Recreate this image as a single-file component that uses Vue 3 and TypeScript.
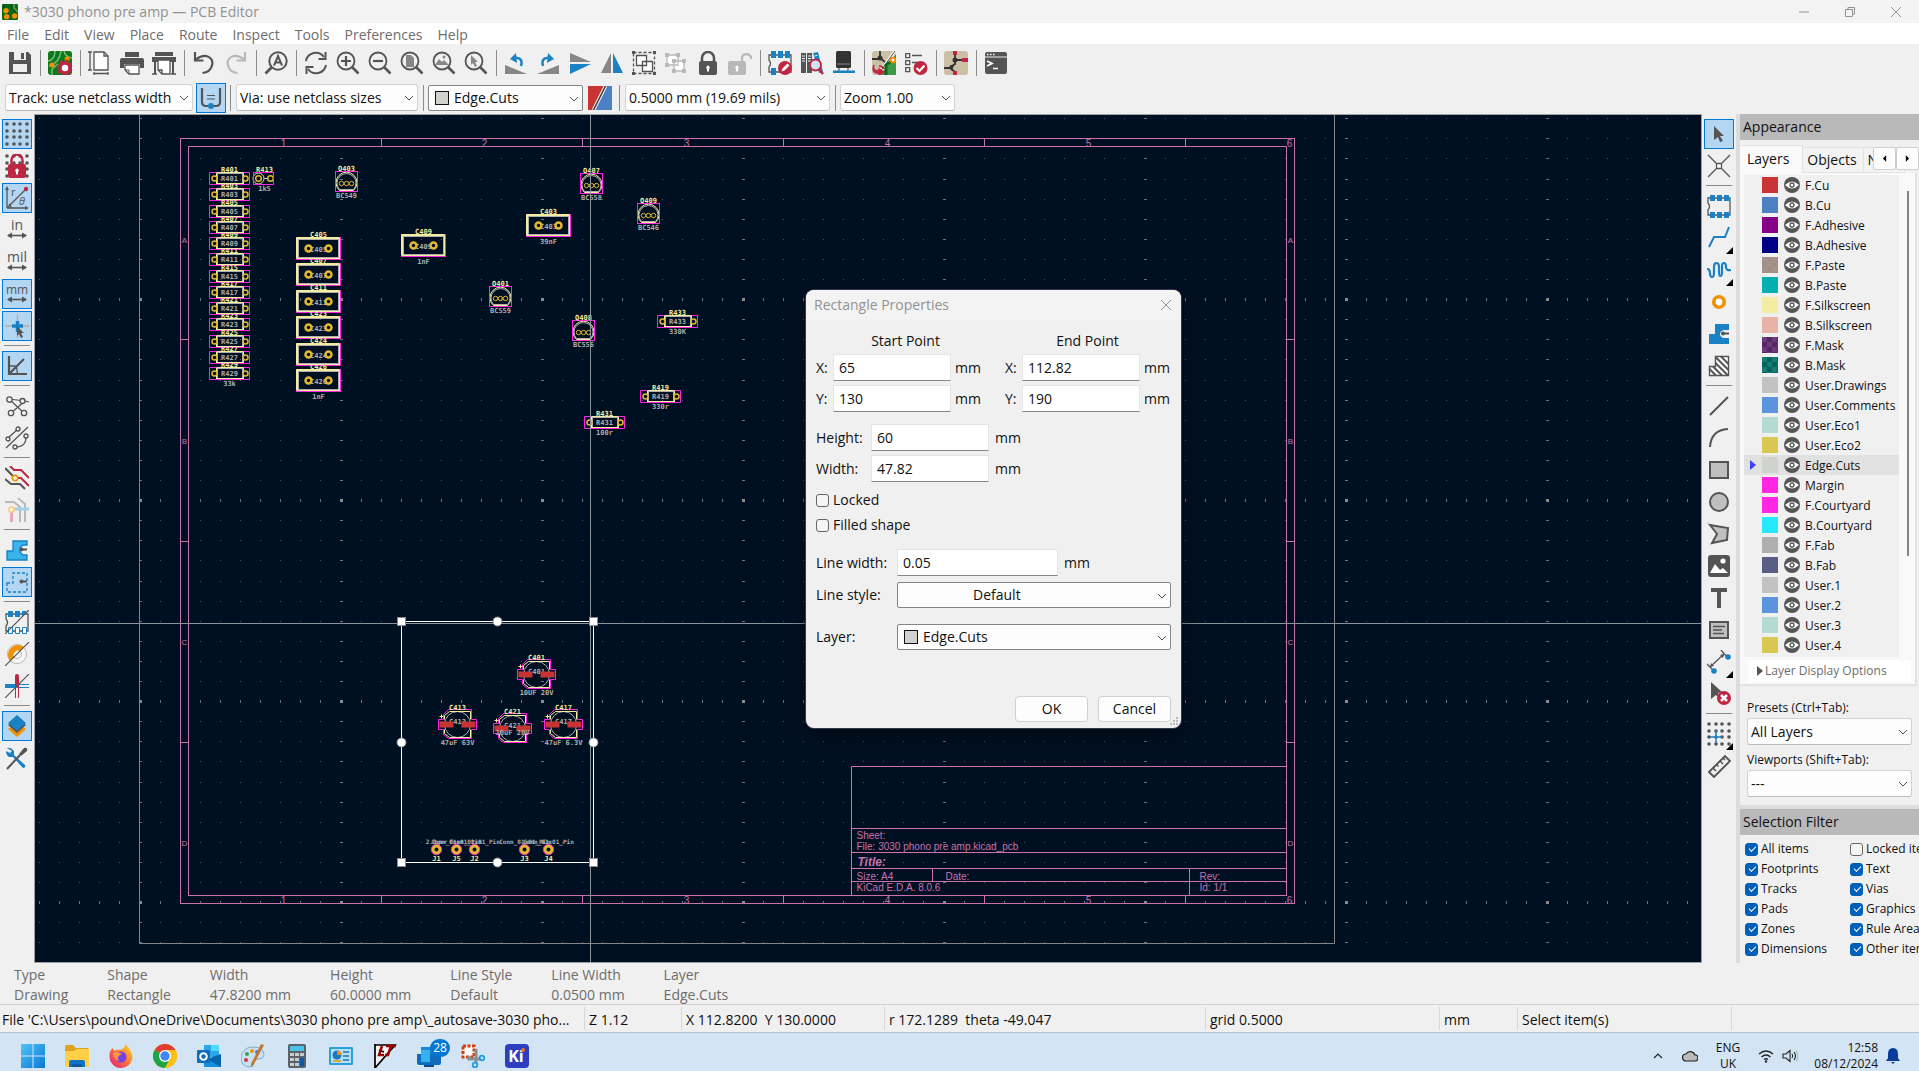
<script setup lang="ts">
import { ref } from 'vue'

type ToolItem = { icon: string; label: string; on?: boolean; more?: boolean } | null

const D = '#545454'
const B = '#1a81c4'
const R = '#bf2641'
const O = '#f29100'
const G = '#b9b9b9'

const lens = `<circle cx="10" cy="10" r="8.500" fill="none" stroke="${D}" stroke-width="1.800"/><path d="M16 16l6.500 6.500" stroke="${D}" stroke-width="2.500"/>`
const gridDots = (c: string) =>
  [2, 9, 15, 22].map(y => [2, 9, 15, 22].map(x => `<circle cx="${x}" cy="${y}" r="1.800" fill="${c}"/>`).join('')).join('')
const unitArrow = `<path d="M3 17.500h18" stroke="${D}" stroke-width="1.600"/><path d="M2 17.500l5-3v6zM22 17.500l-5-3v6z" fill="${D}"/>`
const unit = (t: string, size: number) =>
  `<text x="12" y="12" text-anchor="middle" font-family="Open Sans, sans-serif" font-size="${size}" fill="${D}">${t}</text>${unitArrow}`
const chip = `<path d="M1 4h22v17H1v-5q3-3.500 0-7z" fill="none" stroke="${D}" stroke-width="1.300"/>`
const chipPads = `<path d="M3 1h5v6H3zM10 1h5v6h-5zM17 1h5v6h-5zM3 18h5v6H3zM10 18h5v6h-5zM17 18h5v6h-5z" fill="${B}"/>`

const icons: Record<string, string> = {
  app: `<rect width="24" height="24" rx="2" fill="#0a6b14"/><path d="M3 0v7l6 5v12M14 0v5l5 5v14" stroke="#052" stroke-width="3" fill="none"/><path d="M18 0v6l6 6" stroke="#6aaf5a" stroke-width="2" fill="none"/><circle cx="6" cy="10" r="4" fill="${O}"/><circle cx="7" cy="19" r="4" fill="${O}"/><circle cx="19" cy="18" r="4" fill="${O}"/>`,
  save: `<path d="M1 1h19l3 3v19H1z" fill="${D}"/><rect x="6" y="1" width="12" height="8" fill="#efefef"/><rect x="13" y="2" width="3" height="6" fill="${D}"/><rect x="5" y="13" width="14" height="8" fill="#efefef"/>`,
  boardSetup: `<rect width="24" height="24" rx="3" fill="#0c7a1c"/><path d="M0 10C6 9 7 5 7 0M1 15c8-2 11-7 12-15M16 0q1 6 8 7M4 24v-6l6-5" fill="none" stroke="#7dbb7d" stroke-width="1.500"/><circle cx="4" cy="14" r="2.500" fill="${O}"/><circle cx="19" cy="8" r="2.500" fill="${O}"/><circle cx="17" cy="17" r="5" fill="#fff" stroke="${R}" stroke-width="3.500"/><circle cx="17" cy="17" r="7.500" fill="none" stroke="${R}" stroke-width="1.800" stroke-dasharray="3 2.900"/>`,
  page: `<path d="M6 1h10l4 4v14H6z" fill="#fff" stroke="${D}" stroke-width="1.300"/><path d="M16 1v4h4M2 1v18M0 1h4M0 19h4M6 22.500h14M6 21v3M20 21v3" fill="none" stroke="${D}" stroke-width="1.300"/>`,
  print: `<path d="M5 1h14v5H5zM0 9q0-2 2-2h20q2 0 2 2v8h-4v-4H4v4H0z" fill="${D}"/><path d="M5 14h14v9H9l-4-4z" fill="#fff" stroke="${D}" stroke-width="1.300"/><path d="M5 19h4v4" fill="none" stroke="${D}"/>`,
  plot: `<path d="M3 1h18v4H3zM0 6h24v5H0zM2 11h2v12H2zM20 11h2v12h-2z" fill="${D}"/><path d="M6 9h12v14h-8l-4-4z" fill="#fff" stroke="${D}" stroke-width="1.300"/><path d="M6 19h4v4M0 23h5M19 23h5" fill="none" stroke="${D}" stroke-width="1.300"/>`,
  undo: `<path d="M4 8.500C14 1 22 7 20 14.500q-2 7-9.500 7.500" fill="none" stroke="${D}" stroke-width="2.200"/><path d="M3 1v8.500h8.500" fill="none" stroke="${D}" stroke-width="2.200"/>`,
  redo: `<path d="M20 8.500C10 1 2 7 4 14.500q2 7 9.500 7.500" fill="none" stroke="${G}" stroke-width="2.200"/><path d="M21 1v8.500h-8.500" fill="none" stroke="${G}" stroke-width="2.200"/>`,
  find: `<circle cx="14" cy="10" r="8.700" fill="none" stroke="${D}" stroke-width="2"/><path d="M8 16l-6.500 6.500" stroke="${D}" stroke-width="2.800"/><path d="M10 14.500l4-9.500 4 9.500M11.500 11.500h5" fill="none" stroke="${D}" stroke-width="2"/>`,
  refresh: `<path d="M2 10a10 10 0 0 1 18-4M22 14a10 10 0 0 1-18 4" fill="none" stroke="${D}" stroke-width="2"/><path d="M21.500 1v7h-7M2.500 23v-7h7" fill="none" stroke="${D}" stroke-width="2"/>`,
  zoomIn: `${lens}<path d="M5 10h10M10 5v10" stroke="${D}" stroke-width="2.200"/>`,
  zoomOut: `${lens}<path d="M5 10h10" stroke="${D}" stroke-width="2.200"/>`,
  zoomPage: `${lens}<path d="M6 4h5l3 3v9H6z" fill="#868686"/>`,
  zoomObj: `${lens}<path d="M3 14l4-6 3 3 2-2 5 5z" fill="#868686"/><circle cx="12" cy="6" r="1.500" fill="#868686"/>`,
  zoomSel: `${lens}<path d="M7 4l7 7h-3l2 4-2 1-2-4-2 2z" fill="#868686"/>`,
  rotL: `<path d="M1 14l22 9H1z" fill="#868686"/><path d="M17 15c2-7-2-9-8-8" fill="none" stroke="${B}" stroke-width="2.500"/><path d="M12 2L6 8l7 4z" fill="${B}"/>`,
  rotR: `<path d="M23 14v9H1z" fill="#868686"/><path d="M7 15C5 8 9 6 15 7" fill="none" stroke="${B}" stroke-width="2.500"/><path d="M12 2l6 6-7 4z" fill="${B}"/>`,
  flipV: `<path d="M2 2l21 9H2z" fill="#868686"/><path d="M2 13h21L2 23z" fill="${B}"/>`,
  flipH: `<path d="M11 2v20H1z" fill="#868686"/><path d="M13 2v20h10z" fill="${B}"/>`,
  group: `<path d="M1.500 1.500h21v21h-21z" fill="none" stroke="${D}" stroke-width="1.300" stroke-dasharray="3 2"/><path d="M0 0h3v3H0zM21 0h3v3h-3zM0 21h3v3H0zM21 21h3v3h-3z" fill="${D}"/><path d="M4.500 4.500h10v10h-10zM10.500 10.500h10v10h-10z" fill="#fff" stroke="${D}" stroke-width="1.300"/>`,
  ungroup: `<path d="M3 4h11v10H3zM10 10h10v10H10z" fill="#fff" stroke="${G}" stroke-width="1.300"/><path d="M1 2h4v4H1zM12 2h4v4h-4zM1 12h4v4H1zM8 8h4v4H8zM18 8h4v4h-4zM8 18h4v4H8zM18 18h4v4h-4z" fill="${G}"/>`,
  lock: `<path d="M6 11V7a6 6 0 0 1 12 0v4" fill="none" stroke="${D}" stroke-width="2.500"/><rect x="3" y="10" width="18" height="14" rx="2" fill="${D}"/><path d="M12 14.500a2 2 0 0 1 1 3.500v2.500h-2V18a2 2 0 0 1 1-3.500" fill="#fff"/>`,
  unlock: `<path d="M14 11V6a5 5 0 0 1 9 0v2" fill="none" stroke="${G}" stroke-width="2.200"/><rect x="0" y="10" width="18" height="14" rx="2" fill="${G}"/><path d="M9 14.500a2 2 0 0 1 1 3.500v2.500H8V18a2 2 0 0 1 1-3.500" fill="#fff"/>`,
  fpEdit: `${chip}<path d="M3 0h5v7H3zM10 0h5v7h-5zM17 0h5v7h-5zM3 17h5v7H3z" fill="${B}"/><circle cx="17" cy="17" r="7" fill="${R}"/><path d="M13.500 20.500l1-3 5-5 2 2-5 5z" fill="#fff"/>`,
  lib: `<path d="M1 2h5v20H1zM7 2h5v20H7z" fill="${D}"/><path d="M13 2l5-1 5 20-4 1z" fill="${B}"/><path d="M2 5h3M2 7.500h3M2 10h3M8 5h3M8 7.500h3M8 10h3M14.500 5l3-.700" stroke="#efefef"/><path d="M19 18l4 5" stroke="${R}" stroke-width="2.500"/><circle cx="15.500" cy="14" r="5.500" fill="#cfe3f3" stroke="${R}" stroke-width="1.800"/>`,
  view3d: `<rect x="4" y="0" width="15" height="17" rx="1.500" fill="#333"/><path d="M5 13h13" stroke="#888"/><path d="M7 17v4M16 17v4" stroke="#777" stroke-width="1.500"/><rect x="1" y="19.500" width="22" height="2.500" fill="${B}"/>`,
  update: `<rect width="24" height="24" rx="3" fill="#cbbfa5"/><path d="M24 3v21H9z" fill="#3f9a48"/><path d="M0 8h8M8 0v7l5 4" stroke="#333" stroke-width="1.800" fill="none"/><circle cx="8" cy="7" r="2.500" fill="#333"/><path d="M23 0L8 21" stroke="#fff" stroke-width="3"/><path d="M23 0L8 21" stroke="#444" stroke-width="1"/><path d="M14 24V14l10-7" stroke="#0a6b14" stroke-width="3" fill="none"/><circle cx="21" cy="9" r="2.300" fill="#fff" stroke="${O}" stroke-width="2"/><path d="M2 14q-2 6 5 6v-2l5 3-5 3v-2q-8 0-5-8M12 18q-1-3-5-3" fill="${R}" stroke="${R}" stroke-width="1.500"/>`,
  drc: `<path d="M1.700 2.700h4v4h-4zM1.700 9.700h4v4h-4zM1.700 16.700h4v4h-4zM8 4.500h10M8 11.500h6" fill="none" stroke="${D}" stroke-width="1.300"/><circle cx="16.500" cy="17" r="7" fill="${R}"/><path d="M12.500 17l3 3 5-5.500" fill="none" stroke="#fff" stroke-width="2.200"/>`,
  net: `<rect width="24" height="24" rx="3" fill="#cbbfa5"/><path d="M11 3v11M11 9h10M0 17h5l6-4M6 17l5 4" stroke="#333" stroke-width="1.800" fill="none"/><circle cx="11" cy="9" r="2.500" fill="#333"/><path d="M6 14l4 0-2 6z" fill="#333"/><path d="M9 0h4v4H9zM18 7h6v4h-6zM9 20h4v4H9z" fill="${R}"/>`,
  script: `<rect x="1" y="1" width="22" height="22" rx="2" fill="${D}"/><path d="M1 6h22" stroke="#efefef"/><path d="M3 3.500h1.500M6 3.500h1.500M9 3.500h1.500" stroke="#fff" stroke-width="1.500"/><path d="M3 10l5 2.500L3 15M9 17.500h5" fill="none" stroke="#fff" stroke-width="1.700"/>`,
  trackVia: `<path d="M3 2v14q0 4 4 4h10q4 0 4-4V2" fill="none" stroke="${D}" stroke-width="2.200"/><path d="M8 9.500h8M8 13h8" stroke="${D}" stroke-width="1.200"/><circle cx="12" cy="20" r="3" fill="${B}"/>`,
  pair: `<path d="M0 0h18L6 24H0z" fill="#c83434"/><path d="M18 0h6v24H6z" fill="#4d7fc4"/><path d="M17.500 0L5.500 24" stroke="#fff" stroke-width="3.500"/><path d="M17.500 0L5.500 24" stroke="#333" stroke-width="1.500"/>`,
  grid: gridDots(D),
  gridLock: `${gridDots(D)}<path d="M6.500 12V6a5.500 5.500 0 0 1 11 0v6" fill="none" stroke="${R}" stroke-width="2.500"/><rect x="3" y="10" width="18" height="14" rx="2" fill="${R}"/><path d="M12 14.500a2 2 0 0 1 1 3.500v2.500h-2V18a2 2 0 0 1 1-3.500" fill="#fff"/>`,
  polar: `<path d="M2 22V2M2 22h20M2 22L20 4M6 22q0-2-2-4" fill="none" stroke="${D}" stroke-width="1.300"/><path d="M2 0l2 4H0zM24 22l-4-2v4z" fill="${D}"/><circle cx="21" cy="3" r="2.200" fill="${R}"/><text x="6" y="10" font-size="11" font-family="Open Sans, sans-serif" fill="${D}">r</text><text x="14" y="19" font-size="11" font-style="italic" font-family="Open Sans, sans-serif" fill="${D}">θ</text>`,
  in: unit('in', 14),
  mil: unit('mil', 14),
  mm: unit('mm', 12),
  cursor: `<path d="M0 12h24M12.500 0v24" stroke="#b9a999" stroke-width="1.300"/><path d="M7 12h11M12.500 7v11" stroke="${B}" stroke-width="3.500"/><path d="M12 12l7 7h-3l2 4-2 1-2-4-2 2z" fill="${D}"/>`,
  angle: `<path d="M4 2v18h18M4 20L19 5" fill="none" stroke="${D}" stroke-width="2.200"/><path d="M4 12h6q3 3 2 8" fill="none" stroke="${D}" stroke-width="1.300"/>`,
  rats: `<path d="M4 5l16 2M4 5l15 14M20 7L6 19M20 7l4 1" stroke="${D}" stroke-width="1.200"/><g fill="#f0f0f0" stroke="${D}" stroke-width="1.300"><circle cx="4.500" cy="5.500" r="2.700"/><circle cx="17.500" cy="7" r="2.500"/><circle cx="6" cy="19" r="2.700"/><circle cx="19" cy="19" r="2.700"/></g>`,
  ratsCurve: `<path d="M1 22L23 1M3 12l10-9M10 21c9 0 11-4 11-10" fill="none" stroke="${D}" stroke-width="1.300"/><g fill="#f0f0f0" stroke="${D}" stroke-width="1.300"><circle cx="3" cy="13" r="2"/><circle cx="13" cy="3" r="2"/><circle cx="10" cy="21" r="2"/><circle cx="21" cy="10" r="2"/></g>`,
  netColor: `<path d="M0 2l9 9M0 13l6 5h9l5 5" fill="none" stroke="${D}" stroke-width="2"/><path d="M5 0l4 4h7l8 8M11 12h5l8 8" fill="none" stroke="${R}" stroke-width="2"/><circle cx="10" cy="12" r="2.700" fill="#fff" stroke="${O}" stroke-width="1.700"/>`,
  netDim: `<path d="M0 4h9l6 5v15M13 0l7 6v18" fill="none" stroke="${G}" stroke-width="2"/><path d="M6 11h18" stroke="#a5cee9" stroke-width="3"/><path d="M6.500 12v12" stroke="#e6a9b3" stroke-width="3"/><circle cx="6.500" cy="11.500" r="2.500" fill="#fff" stroke="#f8d08f" stroke-width="2"/>`,
  zone: `<path d="M2 13h6V3h14v4h-4l-3 3v4l3 3h4v5H2z" fill="#39b4ea" stroke="${B}" stroke-width="1.300"/><circle cx="16.500" cy="11.500" r="2" fill="${D}"/><path d="M17 11.500h5" stroke="${D}" stroke-width="2"/>`,
  zoneOut: `<path d="M2 13h6V3h14v19H2z" fill="none" stroke="${B}" stroke-width="1.300" stroke-dasharray="3 2"/><circle cx="16.500" cy="11.500" r="2" fill="${D}"/><path d="M17 11.500h5" stroke="${D}" stroke-width="2"/>`,
  padOut: `${chip}<path d="M3 1h5v6H3zM10 1h5v6h-5zM17 1h5l-5 6z" fill="${B}"/><path d="M3.500 17.500h4v6h-4zM10.500 17.500h4v6h-4zM17.500 17.500h4v6h-4z" fill="#fff" stroke="${B}"/><path d="M0 24L24 0" stroke="${D}" stroke-width="1.200"/>`,
  viaOut: `<circle cx="12" cy="12" r="9.500" fill="#f6f6f6" stroke="${G}"/><circle cx="12" cy="12" r="4.500" fill="none" stroke="${G}"/><path d="M19 5A10 10 0 0 0 5 19l4-4a4.500 4.500 0 0 1 6-6z" fill="${O}"/><path d="M0 24L24 0" stroke="${D}" stroke-width="1.200"/>`,
  trackOut: `<path d="M1 12h10" stroke="${B}" stroke-width="4" stroke-linecap="round"/><path d="M12 2v9" stroke="${R}" stroke-width="4" stroke-linecap="round"/><path d="M12 10.500h12M12 13.500h12" stroke="${B}"/><path d="M10.500 12v12M13.500 12v12" stroke="${R}"/><path d="M0 24L24 0" stroke="${D}" stroke-width="1.200"/>`,
  layers: `<path d="M3 15l9 8 9-8-3-2-6 5-6-5z" fill="${O}"/><path d="M3 11l9 8 9-8-3-2-6 5-6-5z" fill="${D}"/><path d="M12 1l9 8-9 8-9-8z" fill="${B}"/>`,
  prefs: `<path d="M2 2q4-1 7 3v4l11 10q1 3-2 3L8 11H4Q1 9 1 5l4 2 2-2z" fill="${B}"/><path d="M2 23L15 9" stroke="${D}" stroke-width="2"/><path d="M14 8l5-6q4-1 3 3l-6 5z" fill="${D}"/>`,
  arrow: `<path d="M7 4l10 10h-4l3 5-3 1-2-5-4 3z" fill="${D}"/>`,
  cross: `<path d="M1 1l22 22M23 1L1 23" stroke="${D}" stroke-width="1.300"/><rect x="9.500" y="9.500" width="5" height="5" rx="1" fill="#fff" stroke="${D}" stroke-width="1.300"/>`,
  fpAdd: chip + chipPads,
  route: `<path d="M2 21l5-10h11l4-10" fill="none" stroke="${B}" stroke-width="2"/>`,
  tune: `<path d="M0 11q3 0 3 4t2 4 2-5V9q0-4 2.500-4T12 9v5q0 4 1.500 4T15 14V8q0-3 2-3t2 4q0 4 5 3" fill="none" stroke="${B}" stroke-width="2.200"/>`,
  via: `<circle cx="12" cy="12" r="5.200" fill="#fff" stroke="${O}" stroke-width="3.600"/>`,
  zoneAdd: `<path d="M2 12h6V2h14v6h-5q-4 1-4 4t4 4h5v6H2z" fill="${B}"/><circle cx="16" cy="11.500" r="2" fill="${D}"/><path d="M16 11.500h6" stroke="${D}" stroke-width="2"/>`,
  rule: `<path d="M2.500 12.500h6v-10h13v19h-19z" fill="#fff" stroke="${D}" stroke-width="1.400"/><path d="M2.500 15l6.500 6.500M6 12.500l9 9M8.500 9L21 21.500M8.500 3L21.500 16M14 2.500l7.500 7.500" stroke="${D}" stroke-width="2"/>`,
  line: `<path d="M3 21L21 3" stroke="${D}" stroke-width="2"/>`,
  arc: `<path d="M3 21Q4 4 21 3" fill="none" stroke="${D}" stroke-width="2"/>`,
  rect: `<rect x="3" y="4" width="18" height="16" fill="#bfbfbf" stroke="${D}" stroke-width="2"/>`,
  circle: `<circle cx="12" cy="12" r="9" fill="#bfbfbf" stroke="${D}" stroke-width="2"/>`,
  poly: `<path d="M3 3l18 3-1 12-15 3 5-9z" fill="#bfbfbf" stroke="${D}" stroke-width="2"/>`,
  image: `<rect x="1" y="1" width="22" height="22" rx="3" fill="${D}"/><path d="M3 19l5-9 5 6 3-2 5 5z" fill="#fff"/><circle cx="16" cy="7" r="2.600" fill="#fff"/>`,
  text: `<path d="M4 2h16v4h-6v16h-4V6H4z" fill="${D}"/>`,
  textbox: `<rect x="3" y="4" width="18" height="16" fill="#bfbfbf" stroke="${D}" stroke-width="2"/><path d="M6 8.500h12M6 12h9M6 15.500h11" stroke="${D}" stroke-width="1.300"/>`,
  dim: `<path d="M3 17L17 4M0 14l6 6M14 0l6 7" stroke="${D}" stroke-width="1.300"/><path d="M3 17l1-4 3 3zM17 4l-4 1 3 3z" fill="${D}"/><circle cx="7" cy="21" r="2.800" fill="${B}"/><circle cx="21" cy="7" r="2.800" fill="${B}"/>`,
  del: `<path d="M4 0l11 10-4 1 1 5-3-3-5 4z" fill="${D}"/><circle cx="17" cy="16" r="7" fill="${R}"/><path d="M14 13l6 6M20 13l-6 6" stroke="#fff" stroke-width="2.500"/>`,
  origin: `${gridDots(D)}<path d="M3 15h12M9 9v12" stroke="${B}" stroke-width="1.500"/>`,
  measure: `<path d="M2 18L18 2l5 5L7 23z" fill="none" stroke="${D}" stroke-width="1.900"/><path d="M6 14l3 3M9.500 10.500l2 2M13 7l3 3M16 4l2 2" stroke="${D}" stroke-width="1.500"/>`,
}

const topTools: ToolItem[] = [
  { icon: 'save', label: 'Save' }, null,
  { icon: 'boardSetup', label: 'Board Setup' }, null,
  { icon: 'page', label: 'Page Settings' }, { icon: 'print', label: 'Print' }, { icon: 'plot', label: 'Plot' }, null,
  { icon: 'undo', label: 'Undo' }, { icon: 'redo', label: 'Redo' }, null,
  { icon: 'find', label: 'Find' }, null,
  { icon: 'refresh', label: 'Refresh' }, { icon: 'zoomIn', label: 'Zoom In' }, { icon: 'zoomOut', label: 'Zoom Out' },
  { icon: 'zoomPage', label: 'Zoom to Fit' }, { icon: 'zoomObj', label: 'Zoom to Objects' }, { icon: 'zoomSel', label: 'Zoom to Selection' }, null,
  { icon: 'rotL', label: 'Rotate Counterclockwise' }, { icon: 'rotR', label: 'Rotate Clockwise' },
  { icon: 'flipV', label: 'Mirror Vertically' }, { icon: 'flipH', label: 'Mirror Horizontally' },
  { icon: 'group', label: 'Group' }, { icon: 'ungroup', label: 'Ungroup' }, { icon: 'lock', label: 'Lock' }, { icon: 'unlock', label: 'Unlock' }, null,
  { icon: 'fpEdit', label: 'Footprint Editor' }, { icon: 'lib', label: 'Footprint Library' }, { icon: 'view3d', label: '3D Viewer' }, null,
  { icon: 'update', label: 'Update PCB' }, { icon: 'drc', label: 'Design Rules Checker' }, null,
  { icon: 'net', label: 'Schematic Editor' }, null,
  { icon: 'script', label: 'Scripting Console' },
]

const leftTools: ToolItem[] = [
  { icon: 'grid', label: 'Show Grid', on: true }, { icon: 'gridLock', label: 'Grid Overrides' },
  { icon: 'polar', label: 'Polar Coordinates', on: true }, { icon: 'in', label: 'Inches' }, { icon: 'mil', label: 'Mils' },
  { icon: 'mm', label: 'Millimeters', on: true }, { icon: 'cursor', label: 'Full-Window Crosshairs', on: true }, null,
  { icon: 'angle', label: '45 Degree Limit', on: true }, null,
  { icon: 'rats', label: 'Show Ratsnest' }, { icon: 'ratsCurve', label: 'Curved Ratsnest' }, null,
  { icon: 'netColor', label: 'Inactive Layer Mode' }, { icon: 'netDim', label: 'Net Highlight' }, null,
  { icon: 'zone', label: 'Draw Zone Fills' }, { icon: 'zoneOut', label: 'Draw Zone Outlines', on: true }, null,
  { icon: 'padOut', label: 'Sketch Pads' }, { icon: 'viaOut', label: 'Sketch Vias' }, { icon: 'trackOut', label: 'Sketch Tracks' }, null,
  { icon: 'layers', label: 'Appearance Manager', on: true }, { icon: 'prefs', label: 'Properties Manager' },
]

const rightTools: ToolItem[] = [
  { icon: 'arrow', label: 'Select', on: true }, { icon: 'cross', label: 'Local Ratsnest' }, null,
  { icon: 'fpAdd', label: 'Place Footprint' }, { icon: 'route', label: 'Route Tracks', more: true }, { icon: 'tune', label: 'Tune Length', more: true },
  { icon: 'via', label: 'Place Via' }, { icon: 'zoneAdd', label: 'Draw Zone' }, { icon: 'rule', label: 'Draw Rule Area' }, null,
  { icon: 'line', label: 'Draw Line' }, { icon: 'arc', label: 'Draw Arc' }, { icon: 'rect', label: 'Draw Rectangle' },
  { icon: 'circle', label: 'Draw Circle' }, { icon: 'poly', label: 'Draw Polygon' }, { icon: 'image', label: 'Place Image' },
  { icon: 'text', label: 'Place Text' }, { icon: 'textbox', label: 'Draw Text Box' }, { icon: 'dim', label: 'Draw Dimension', more: true },
  { icon: 'del', label: 'Delete' }, null,
  { icon: 'origin', label: 'Grid Origin', more: true }, { icon: 'measure', label: 'Measure' },
]

const menus = ['File', 'Edit', 'View', 'Place', 'Route', 'Inspect', 'Tools', 'Preferences', 'Help']

const layers: [string, string, string?][] = [
  ['F.Cu', '#c83434'], ['B.Cu', '#4d7fc4'], ['F.Adhesive', '#840084'], ['B.Adhesive', '#000084'],
  ['F.Paste', '#a5948c', '#a08f87'], ['B.Paste', '#00b2b2', '#08acac'], ['F.Silkscreen', '#f2eda1'], ['B.Silkscreen', '#e8b2a7'],
  ['F.Mask', '#6d3a80', '#562662'], ['B.Mask', '#187c72', '#02645c'], ['User.Drawings', '#c2c2c2'], ['User.Comments', '#5994dc'],
  ['User.Eco1', '#b4dbd2'], ['User.Eco2', '#d8c852'], ['Edge.Cuts', '#d0d2cd'], ['Margin', '#ff26e2'],
  ['F.Courtyard', '#ff26e2'], ['B.Courtyard', '#26e9ff'], ['F.Fab', '#afafaf'], ['B.Fab', '#585d84'],
  ['User.1', '#c2c2c2'], ['User.2', '#5994dc'], ['User.3', '#b4dbd2'], ['User.4', '#d8c852'],
]
const checks = (c: string) => `conic-gradient(${c} 25%, transparent 0 50%, ${c} 0 75%, transparent 0)`

const filters = ref([
  { name: 'All items', on: true }, { name: 'Locked items', on: false },
  { name: 'Footprints', on: true }, { name: 'Text', on: true },
  { name: 'Tracks', on: true }, { name: 'Vias', on: true },
  { name: 'Pads', on: true }, { name: 'Graphics', on: true },
  { name: 'Zones', on: true }, { name: 'Rule Areas', on: true },
  { name: 'Dimensions', on: true }, { name: 'Other items', on: true },
])

const info = [
  ['Type', 'Drawing'], ['Shape', 'Rectangle'], ['Width', '47.8200 mm'], ['Height', '60.0000 mm'],
  ['Line Style', 'Default'], ['Line Width', '0.0500 mm'], ['Layer', 'Edge.Cuts'],
]

const status = ["File 'C:\\Users\\pound\\OneDrive\\Documents\\3030 phono pre amp\\_autosave-3030 pho...",
  'Z 1.12', 'X 112.8200  Y 130.0000', 'r 172.1289  theta -49.047', 'grid 0.5000', 'mm', 'Select item(s)', '']

// Grid: minor lines every 20 px, a major line every tenth.
const gridSteps = Array.from({ length: 100 }, (_, k) => {
  const i = k % 10
  const j = Math.floor(k / 10)
  return { x: 1 + i * 20, y: 1 + j * 20 + (j > 3 ? 1 : 0), mx: i === 0, my: j === 0 }
})

const resistorRefs = ['R401', 'R403', 'R405', 'R407', 'R409', 'R411', 'R415', 'R417', 'R421', 'R423', 'R425', 'R427', 'R429']
const resistors = [
  ...resistorRefs.map((name, i) => ({ name, x: 229, y: Math.round(172 + i * 16.25), value: i === 12 ? '33k' : '' })),
  { name: 'R433', x: 677, y: 315, value: '330K' },
  { name: 'R419', x: 660, y: 390, value: '330r' },
  { name: 'R431', x: 604, y: 416, value: '100r' },
]
const capacitors = [
  ...['C405', 'C407', 'C411', 'C423', 'C424', 'C426'].map((name, i) => ({ name, x: 318, y: Math.round(237 + i * 26.4), value: i === 5 ? '1nF' : '' })),
  { name: 'C409', x: 423, y: 234, value: '1nF' },
  { name: 'C403', x: 548, y: 214, value: '39nF' },
]
const transistors = [
  { name: 'Q403', x: 346, y: 171, value: 'BC549' }, { name: 'Q407', x: 591, y: 173, value: 'BC558' },
  { name: 'Q409', x: 648, y: 203, value: 'BC546' }, { name: 'Q401', x: 500, y: 286, value: 'BC559' },
  { name: 'Q408', x: 583, y: 320, value: 'BC556' },
]
const electrolytics = [
  { name: 'C401', x: 536, y: 674, value: '10UF 20V', dy: 20 }, { name: 'C413', x: 457, y: 724, value: '47uF 63V', dy: 20 },
  { name: 'C421', x: 512, y: 728, value: '10uF 20V', dy: 6 }, { name: 'C417', x: 563, y: 724, value: '47uF 6.3V', dy: 20 },
]
const connectors = [
  { name: 'J1', x: 436, part: '2.0gnr' }, { name: 'J5', x: 456, part: 'Conn_01x01_Pin' }, { name: 'J2', x: 474, part: 'Conn_01x01_Pin' },
  { name: 'J3', x: 524, part: 'Conn_01x01_Pin' }, { name: 'J4', x: 548, part: 'Conn_01x01_Pin' },
]
const handles = [[401, 621], [593, 621], [401, 862], [593, 862]]
const midHandles = [[497, 621], [497, 862], [401, 742], [593, 742]]

const taskIcons: { label: string; svg: string }[] = [
  { label: 'Start', svg: '<defs><linearGradient id="wn" x2="1" y2="1"><stop stop-color="#4fc3f7"/><stop offset="1" stop-color="#0a78d4"/></linearGradient></defs><path d="M0 0h11.500v11.500H0zM12.500 0H24v11.500H12.500zM0 12.500h11.500V24H0zM12.500 12.500H24V24H12.500z" fill="url(#wn)"/>' },
  { label: 'File Explorer', svg: '<path d="M0 3q0-2 2-2h6l3 3h11q2 0 2 2v14H0z" fill="#e0a21b"/><path d="M0 7h9l3-2h12v16q0 2-2 2H2q-2 0-2-2z" fill="#ffcf48"/><path d="M4 23v-5q0-2 2-2h12q2 0 2 2v5z" fill="#1273c6"/><path d="M7 20h10v3H7z" fill="#0b5aa5"/>' },
  { label: 'Firefox', svg: '<defs><linearGradient id="ff" x1="1" y2="1" x2="0"><stop stop-color="#ffe226"/><stop offset=".5" stop-color="#ff7139"/><stop offset="1" stop-color="#e31587"/></linearGradient></defs><path d="M16 0q7 6 7.500 13a11.500 11.500 0 1 1-23-1q0-5 3-8l2 3q3-2 6-1 5-2 4.500-6z" fill="url(#ff)"/><circle cx="12" cy="13" r="5.500" fill="#7542e5"/><path d="M4 9q5-2 9 1-3 1-4 3t2 4q-7-1-7-8z" fill="#ff9640"/>' },
  { label: 'Chrome', svg: '<circle cx="12" cy="12" r="12" fill="#fbc116"/><path d="M12 12L1.600 6A12 12 0 0 1 22.400 6z" fill="#e33b2e"/><path d="M1.600 6A12 12 0 0 0 12 24l5-9-5-3z" fill="#1ea446"/><path d="M12 6h10.400a12 12 0 0 1-10.400 18l5.200-9z" fill="#fbc116"/><circle cx="12" cy="12" r="6" fill="#fff"/><circle cx="12" cy="12" r="4.700" fill="#4285f4"/>' },
  { label: 'Outlook', svg: '<path d="M7 1h15v12H7z" fill="#28a8ea"/><path d="M14 1h8v6h-8z" fill="#50d9ff"/><path d="M7 10l8 5 9-5v13H7z" fill="#1490df"/><path d="M24 10v13L10 15z" fill="#0a64ad"/><rect y="6" width="13" height="13" rx="1" fill="#0f6cbd"/><circle cx="6.500" cy="12.500" r="3.300" fill="none" stroke="#fff" stroke-width="2"/>' },
  { label: 'Paint', svg: '<path d="M12 3C4 3 0 9 0 14q0 8 8 9 4 0 4-4t5-4q6 0 6-5Q22 3 12 3z" fill="#c6e2f5" stroke="#7fa9c5"/><circle cx="6" cy="10" r="2" fill="#3e9f4d"/><circle cx="11" cy="7" r="2" fill="#f29100"/><circle cx="5" cy="16" r="2" fill="#d33"/><circle cx="16" cy="8" r="2" fill="#3b7fd0"/><path d="M23 1L12 22l-2 1 0-3L20 0z" fill="#c5772c"/>' },
  { label: 'Calculator', svg: '<rect x="3" width="18" height="24" rx="2" fill="#5a6168"/><rect x="5" y="2" width="14" height="5" fill="#4cc2e8"/><path d="M5 9h4v3H5zM10 9h4v3h-4zM15 9h4v3h-4zM5 14h4v3H5zM10 14h4v3h-4zM5 19h4v3H5zM10 19h4v3h-4z" fill="#c9cbcd"/><rect x="15" y="14" width="4" height="8" fill="#0b58a8"/>' },
  { label: 'Control Panel', svg: '<rect y="3" width="24" height="18" rx="1" fill="#2a9fd8"/><rect x="2" y="5" width="20" height="14" fill="#b5dff5"/><circle cx="8" cy="11" r="4.500" fill="#1a77c4"/><path d="M8 11V6.500a4.500 4.500 0 0 1 4.500 4.500z" fill="#f29100"/><path d="M14 8h6M14 12h6M14 16h6" stroke="#1a77c4" stroke-width="1.500"/><path d="M4 17h8" stroke="#f29100" stroke-width="1.500"/>' },
  { label: 'LTspice', svg: '<path d="M2 1h21L3 23z" fill="#f3f3f3"/><path d="M2 0v24L22 1H2M6 6l5 2" fill="none" stroke="#000" stroke-width="1.700"/><path d="M9 2l-3 9h5M13 2h10M18 2l-3 9h-3" fill="none" stroke="#900" stroke-width="2.500"/>' },
  { label: 'Mail', svg: '<path d="M4 3h16v14H4z" fill="#1b87d6"/><path d="M0 10h24v9q0 2-2 2H2q-2 0-2-2z" fill="#0f6cbd"/><path d="M4 6h9v12H4z" fill="#34b1ee"/><path d="M7 21h10v2H7z" fill="#0a4d8c"/>' },
  { label: 'Snipping Tool', svg: '<path d="M2 2h11v11H2z" fill="#fff" stroke="#d83b01" stroke-width="3" stroke-dasharray="3 1.500"/><path d="M8 12v3h11M15 5v14" stroke="#8a8f94" stroke-width="3" fill="none"/><circle cx="21" cy="14" r="2.300" fill="none" stroke="#1b9de2" stroke-width="1.800"/><circle cx="14" cy="21" r="2.300" fill="none" stroke="#1b9de2" stroke-width="1.800"/>' },
  { label: 'KiCad', svg: '<rect width="24" height="24" rx="4" fill="#2b3fc0"/><text x="11" y="18" text-anchor="middle" font-family="Open Sans, sans-serif" font-weight="700" font-size="16" fill="#fff">Ki</text><circle cx="18" cy="6" r="2" fill="#f0731c"/>' },
]

const startX = ref('65')
const startY = ref('130')
const endX = ref('112.82')
const endY = ref('190')
const rectHeight = ref('60')
const rectWidth = ref('47.82')
const lineWidth = ref('0.05')
const locked = ref(false)
const filled = ref(false)
</script>

<template>
  <div class="app">
    <header class="titlebar">
      <svg class="app-icon" viewBox="0 0 24 24" v-html="icons.app"></svg>
      <span class="title">*3030 phono pre amp — PCB Editor</span>
      <div class="win-controls">
        <button aria-label="Minimize"><svg viewBox="0 0 12 12"><path d="M1 6h10" /></svg></button>
        <button aria-label="Restore"><svg viewBox="0 0 12 12"><path d="M1.500 3.500h7v7h-7zM4 3V1.500h6.500V8H9" /></svg></button>
        <button aria-label="Close"><svg viewBox="0 0 12 12"><path d="M1 1l10 10M11 1L1 11" /></svg></button>
      </div>
    </header>

    <nav class="menubar">
      <button v-for="m in menus" :key="m">{{ m }}</button>
    </nav>

    <div class="toolbar">
      <template v-for="(t, i) in topTools" :key="i">
        <span v-if="!t" class="vsep"></span>
        <button v-else class="tool" :aria-label="t.label"><svg viewBox="0 0 24 24" v-html="icons[t.icon]"></svg></button>
      </template>
    </div>

    <div class="options">
      <div class="combo track"><select aria-label="Track width"><option>Track: use netclass width</option></select><svg class="chev" viewBox="0 0 10 6"><path d="M1 1l4 4 4-4" /></svg></div>
      <button class="toggle on" aria-label="Use existing track width"><svg viewBox="0 0 24 24" v-html="icons.trackVia"></svg></button>
      <span class="vsep"></span>
      <div class="combo via"><select aria-label="Via size"><option>Via: use netclass sizes</option></select><svg class="chev" viewBox="0 0 10 6"><path d="M1 1l4 4 4-4" /></svg></div>
      <span class="vsep"></span>
      <div class="combo dark swatched layer-combo"><i class="swatch"></i><select aria-label="Active layer"><option>Edge.Cuts</option></select><svg class="chev" viewBox="0 0 10 6"><path d="M1 1l4 4 4-4" /></svg></div>
      <button class="toggle" aria-label="Layer pair"><svg viewBox="0 0 24 24" v-html="icons.pair"></svg></button>
      <span class="vsep"></span>
      <div class="combo grid-combo"><select aria-label="Grid"><option>0.5000 mm (19.69 mils)</option></select><svg class="chev" viewBox="0 0 10 6"><path d="M1 1l4 4 4-4" /></svg></div>
      <span class="vsep"></span>
      <div class="combo zoom-combo"><select aria-label="Zoom"><option>Zoom 1.00</option></select><svg class="chev" viewBox="0 0 10 6"><path d="M1 1l4 4 4-4" /></svg></div>
    </div>

    <main class="workspace">
      <div class="sidebar">
        <template v-for="(t, i) in leftTools" :key="i">
          <span v-if="!t" class="hsep"></span>
          <button v-else class="side-tool" :class="{ on: t.on }" :aria-label="t.label"><svg viewBox="0 0 24 24" v-html="icons[t.icon]"></svg></button>
        </template>
      </div>

      <section class="board">
        <svg class="canvas" aria-label="Board">
          <defs>
            <pattern id="grid" x="104" y="183" width="201" height="201" patternUnits="userSpaceOnUse">
              <rect v-for="(g, i) in gridSteps" :key="i" :x="g.mx ? g.x - 1 : g.x" :y="g.my ? g.y - 1 : g.y" :width="g.mx ? 3 : 1"
                :height="g.my ? 3 : 1" :fill="g.mx && g.my ? '#8a8a8a' : g.mx || g.my ? '#6b7278' : '#4b565f'" />
            </pattern>
          </defs>
          <rect width="100%" height="100%" fill="url(#grid)" shape-rendering="crispEdges" />

          <g transform="translate(-34.500 -114.500)">
            <path d="M139 90V943H1334V90" fill="none" stroke="#848484" />

            <g class="sheet">
              <rect x="180" y="138" width="1114" height="765" />
              <rect x="188" y="146" width="1098" height="749" />
              <path v-for="x in [381, 582, 783, 984, 1185]" :key="x" :d="`M${x} 138v8M${x} 895v8`" />
              <path v-for="y in [339, 541, 742]" :key="y" :d="`M180 ${y}h8M1286 ${y}h8`" />
              <path d="M851 895V766H1286M851 828H1286M851 852H1286M851 868H1286M851 881H1286M932 868v13M1189 868v27" />
            </g>
            <g class="sheet-text">
              <template v-for="(x, i) in [283, 484, 686, 887, 1088, 1289]" :key="x">
                <text :x="x" y="146" text-anchor="middle">{{ i + 1 }}</text>
                <text :x="x" y="903" text-anchor="middle">{{ i + 1 }}</text>
              </template>
              <template v-for="(c, i) in ['A', 'B', 'C', 'D']" :key="c">
                <text x="184" :y="242 + i * 201" class="zone-letter">{{ c }}</text>
                <text x="1290" :y="242 + i * 201" class="zone-letter">{{ c }}</text>
              </template>
              <text x="856" y="838">Sheet:</text>
              <text x="856" y="849">File: 3030 phono pre amp.kicad_pcb</text>
              <text x="857" y="865" class="sheet-title">Title:</text>
              <text x="856" y="879">Size: A4</text>
              <text x="945" y="879">Date:</text>
              <text x="1199" y="879">Rev:</text>
              <text x="856" y="890">KiCad E.D.A. 8.0.6</text>
              <text x="1199" y="890">Id: 1/1</text>
            </g>

            <g v-for="r in resistors" :key="r.name" :transform="`translate(${r.x} ${r.y})`">
              <rect x="-12" y="1" width="25" height="10" class="fab" />
              <rect x="-13" y="0" width="27" height="11" class="silk" />
              <circle cx="-15" cy="6" r="2.500" class="pad" />
              <circle cx="16" cy="6" r="2.500" class="pad" />
              <path d="M-13 0H-20V12H20V0H14M-13 12H14" class="court" />
              <text y="8" class="fab-text">{{ r.name }}</text>
              <text y="-1" class="silk-text">{{ r.name }}</text>
              <text y="18" class="fab-text">{{ r.value }}</text>
            </g>

            <g transform="translate(258 178)">
              <circle r="5.500" class="silk" /><circle r="2.800" class="pad" /><path d="M6 0h4" class="silk" />
              <circle cx="12" r="2.800" class="pad" /><rect x="-5" y="-6" width="20" height="12" class="court" />
              <text x="6" y="-7" class="silk-text">R413</text><text x="6" y="12" class="fab-text">1k5</text>
            </g>

            <g v-for="c in capacitors" :key="c.name" :transform="`translate(${c.x} ${c.y})`">
              <rect x="-22" y="0" width="44" height="22" class="court" />
              <rect x="-20" y="2" width="40" height="18" class="fab" />
              <rect x="-21" y="1" width="42" height="20" class="silk" />
              <path d="M-22 21V0H21" class="silk" />
              <text y="14" class="fab-text">{{ c.name }}</text>
              <circle cx="-10" cy="11" r="3" class="pad wide" />
              <circle cx="10" cy="11" r="3" class="pad wide" />
              <text y="-1" class="silk-text">{{ c.name }}</text>
              <text y="29" class="fab-text">{{ c.value }}</text>
            </g>

            <g v-for="q in transistors" :key="q.name" :transform="`translate(${q.x} ${q.y})`">
              <path d="M-7 18a9.500 9.500 0 1 1 14 0z" class="fab" />
              <path d="M-7 19a10.500 10.500 0 1 1 14 0z" class="silk" />
              <circle v-for="x in [-5, 0, 5]" :key="x" :cx="x" cy="12" r="2.200" class="pad thin" />
              <rect x="-11" y="0" width="22" height="20" class="court" />
              <text y="-1" class="silk-text">{{ q.name }}</text>
              <text y="26" class="fab-text">{{ q.value }}</text>
            </g>

            <g v-for="c in electrolytics" :key="c.name" :transform="`translate(${c.x} ${c.y})`">
              <circle r="13" class="fab" />
              <text y="-1" class="fab-text">{{ c.name }}</text>
              <path d="M-13-5V-9l5-4H13V-5M-13 5V9l5 4H13V5" class="silk" />
              <path d="M-19-5H-14V-10l5-5H14V-5h5V5h-5V14H-9l-5-4V5h-5z" class="court" />
              <rect x="-18" y="-3" width="14" height="6" fill="#c83434" />
              <rect x="4" y="-3" width="14" height="6" fill="#c83434" />
              <path d="M-18-8h4M-16-10v4" class="silk" />
              <text y="-15" class="silk-text">{{ c.name }}</text>
              <text :y="c.dy" class="fab-text">{{ c.value }}</text>
            </g>

            <g v-for="j in connectors" :key="j.name" :transform="`translate(${j.x} 849)`">
              <text y="-6" class="fab-text small">{{ j.part }}</text>
              <circle r="5.200" fill="#e3b72e" stroke="#ff26e2" />
              <circle r="2" fill="#001023" />
              <text y="11" class="silk-text">{{ j.name }}</text>
            </g>

            <path d="M0 623H4000M590 0V3000" stroke="#8b939b" />

            <rect x="401" y="621" width="192" height="241" fill="none" stroke="#fff" />
            <rect v-for="(h, i) in handles" :key="'h' + i" :x="h[0] - 4" :y="h[1] - 4" width="8" height="8" class="handle" />
            <circle v-for="(h, i) in midHandles" :key="'m' + i" :cx="h[0]" :cy="h[1]" r="4.500" class="handle" />
          </g>
        </svg>

        <form class="dialog" role="dialog" aria-label="Rectangle Properties" @submit.prevent>
          <div class="dialog-title">
            <span>Rectangle Properties</span>
            <button type="button" aria-label="Close dialog"><svg viewBox="0 0 12 12"><path d="M1 1l10 10M11 1L1 11" /></svg></button>
          </div>
          <div class="dialog-body">
            <div class="points">
              <fieldset>
                <legend class="start">Start Point</legend>
                <div class="point"><label for="sx">X:</label><input id="sx" v-model="startX" /><span>mm</span></div>
                <div class="point"><label for="sy">Y:</label><input id="sy" v-model="startY" /><span>mm</span></div>
              </fieldset>
              <fieldset>
                <legend>End Point</legend>
                <div class="point"><label for="ex">X:</label><input id="ex" v-model="endX" /><span>mm</span></div>
                <div class="point"><label for="ey">Y:</label><input id="ey" v-model="endY" /><span>mm</span></div>
              </fieldset>
            </div>
            <div class="size">
              <div class="size-row"><label for="rh">Height:</label><input id="rh" v-model="rectHeight" /><span>mm</span></div>
              <div class="size-row"><label for="rw">Width:</label><input id="rw" v-model="rectWidth" /><span>mm</span></div>
            </div>
            <div class="flags">
              <label><input v-model="locked" type="checkbox" />Locked</label>
              <label><input v-model="filled" type="checkbox" />Filled shape</label>
            </div>
            <div class="line-row"><label for="lw">Line width:</label><input id="lw" v-model="lineWidth" /><span>mm</span></div>
            <div class="line-row"><label for="ls">Line style:</label><div class="combo dark default"><select id="ls"><option>Default</option></select><svg class="chev" viewBox="0 0 10 6"><path d="M1 1l4 4 4-4" /></svg></div></div>
            <div class="line-row layer-row"><label for="ly">Layer:</label><div class="combo dark swatched"><i class="swatch"></i><select id="ly"><option>Edge.Cuts</option></select><svg class="chev" viewBox="0 0 10 6"><path d="M1 1l4 4 4-4" /></svg></div></div>
            <div class="actions"><button type="submit">OK</button><button type="button">Cancel</button></div>
          </div>
          <svg class="grip" viewBox="0 0 8 8"><path d="M6 0h2v2H6zM3 3h2v2H3zM6 3h2v2H6zM0 6h2v2H0zM3 6h2v2H3zM6 6h2v2H6z" fill="#bbb" /></svg>
        </form>
      </section>

      <div class="sidebar">
        <template v-for="(t, i) in rightTools" :key="i">
          <span v-if="!t" class="hsep"></span>
          <button v-else class="side-tool" :class="{ on: t.on, more: t.more }" :aria-label="t.label"><svg viewBox="0 0 24 24" v-html="icons[t.icon]"></svg></button>
        </template>
      </div>

      <aside class="panel">
        <h2>Appearance</h2>
        <div class="tabs">
          <button class="tab active">Layers</button>
          <button class="tab">Objects</button>
          <button class="tab">Nets</button>
          <div class="tab-scroll">
            <button aria-label="Previous tab"><svg viewBox="0 0 6 8"><path d="M5 0v8L1 4z" /></svg></button>
            <button aria-label="Next tab"><svg viewBox="0 0 6 8"><path d="M1 0v8l4-4z" /></svg></button>
          </div>
        </div>
        <div class="tab-page">
          <div class="layer-area">
            <ul class="layers">
              <li v-for="l in layers" :key="l[0]" :class="{ current: l[0] === 'Edge.Cuts' }">
                <i class="color" :style="{ backgroundColor: l[1], backgroundImage: l[2] ? checks(l[2]) : 'none' }"></i>
                <svg class="eye" viewBox="0 0 16 16"><circle cx="8" cy="8" r="8" fill="#545454" /><path d="M1 8q7-7 14 0-7 7-14 0" fill="#fff" /><circle cx="8" cy="8" r="2" fill="#fff" stroke="#545454" stroke-width="1.300" /></svg>
                <span>{{ l[0] }}</span>
              </li>
            </ul>
            <div class="thumb"></div>
          </div>
          <button class="display-options"><svg viewBox="0 0 6 10"><path d="M0 0v10l6-5z" /></svg>Layer Display Options</button>
        </div>
        <div class="presets">
          <label for="presets">Presets (Ctrl+Tab):</label>
          <div class="combo"><select id="presets"><option>All Layers</option></select><svg class="chev" viewBox="0 0 10 6"><path d="M1 1l4 4 4-4" /></svg></div>
          <label for="viewports">Viewports (Shift+Tab):</label>
          <div class="combo"><select id="viewports"><option>---</option></select><svg class="chev" viewBox="0 0 10 6"><path d="M1 1l4 4 4-4" /></svg></div>
        </div>
        <h2 class="second">Selection Filter</h2>
        <div class="filters">
          <label v-for="f in filters" :key="f.name"><input v-model="f.on" type="checkbox" />{{ f.name }}</label>
        </div>
      </aside>
    </main>

    <dl class="info">
      <div v-for="i in info" :key="i[0]"><dt>{{ i[0] }}</dt><dd>{{ i[1] }}</dd></div>
    </dl>

    <footer class="statusbar"><span v-for="(s, i) in status" :key="i">{{ s }}</span></footer>

    <div class="taskbar">
      <button v-for="t in taskIcons" :key="t.label" class="task" :aria-label="t.label">
        <svg viewBox="0 0 24 24" v-html="t.svg"></svg>
        <b v-if="t.label === 'Mail'" class="badge">28</b>
      </button>
      <div class="tray">
        <svg class="tray-icon" viewBox="0 0 16 16"><path d="M4 10l4-4 4 4" fill="none" stroke="#222" stroke-width="1.200" /></svg>
        <svg class="tray-icon cloud" viewBox="0 0 16 16"><path d="M4 13a3.500 3.500 0 0 1 0-7 5 5 0 0 1 9 1 3 3 0 0 1 0 6z" fill="#bbb" stroke="#222" stroke-width="1.200" /></svg>
        <div class="tray-text lang">ENG<br />UK</div>
        <svg class="tray-icon" viewBox="0 0 16 16"><path d="M1 6q7-6 14 0M3.500 9q4.500-4 9 0M6 11.500q2-1.500 4 0" fill="none" stroke="#222" stroke-width="1.300" /><circle cx="8" cy="13.500" r="1.200" fill="#222" /></svg>
        <svg class="tray-icon speaker" viewBox="0 0 16 16"><path d="M1 6h3l4-3.500v11L4 10H1zM10 6q1.500 2 0 4M12 4q3 4 0 8" fill="none" stroke="#222" stroke-width="1.100" /><path d="M14 2.500q4 5.500 0 11" fill="none" stroke="#9ab" /></svg>
        <div class="tray-text clock">12:58<br />08/12/2024</div>
        <svg class="tray-icon" viewBox="0 0 16 16"><path d="M8 0q5 0 5 6v4l2 3H1l2-3V6q0-6 5-6M6 14h4l-2 2z" fill="#0a3c9c" /></svg>
      </div>
    </div>
  </div>
</template>

<style>
body {
  margin: 0;
  overflow: hidden;
}
</style>

<style scoped>
.app {
  display: flex;
  flex-direction: column;
  height: 100vh;
  background: #f0f0f0;
  color: #111;
  font: 14px/20px "Open Sans", "Noto Sans", sans-serif;
  white-space: nowrap;
}
* {
  box-sizing: border-box;
}
button {
  border: 0;
  padding: 0;
  margin: 0;
  background: none;
  font: inherit;
  color: inherit;
}
svg {
  display: block;
}

.titlebar {
  display: flex;
  align-items: center;
  height: 23px;
  padding-left: 2px;
  background: #f3f3f3;
  color: #929292;
}
.app-icon {
  width: 16px;
  height: 16px;
  margin-right: 6px;
}
.win-controls {
  display: flex;
  margin-left: auto;
}
.win-controls button {
  display: grid;
  place-items: center;
  width: 46px;
  height: 20px;
}
.win-controls svg,
.dialog-title svg {
  width: 12px;
  height: 12px;
  fill: none;
  stroke: #929292;
}

.menubar {
  display: flex;
  gap: 15px;
  height: 21px;
  padding: 2px 7px 0;
  background: #fff;
  color: #6d6d6d;
}
.menubar button {
  line-height: 18px;
}

.toolbar {
  display: flex;
  align-items: center;
  height: 37px;
  padding-left: 4px;
}
.tool {
  display: grid;
  place-items: center;
  width: 32px;
  height: 32px;
}
.tool svg,
.side-tool svg,
.toggle svg {
  width: 24px;
  height: 24px;
}
.vsep {
  width: 8px;
  height: 26px;
  background: linear-gradient(#8c8c8c, #8c8c8c) center / 1px 100% no-repeat;
}

.options {
  display: flex;
  align-items: center;
  height: 33px;
  padding-left: 5px;
}
.toggle {
  display: grid;
  place-items: center;
  width: 30px;
  height: 30px;
  border: 1px solid transparent;
}
.toggle.on,
.side-tool.on {
  background: #b3d6f3;
  border-color: #0078d7;
}
.combo {
  position: relative;
}
.combo select {
  display: block;
  width: 100%;
  height: 27px;
  padding: 0 3px;
  appearance: none;
  border: 1px solid #d2d2d2;
  border-bottom-color: #bcbcbc;
  border-radius: 3px;
  background: #fdfdfd;
  font: inherit;
  color: #111;
}
.combo.dark select {
  height: 26px;
  border-color: #848484;
  border-radius: 2px;
}
.combo.swatched select {
  padding-left: 25px;
}
.combo.default select {
  padding-left: 75px;
}
.combo .swatch {
  position: absolute;
  left: 7px;
  top: 6px;
  width: 14px;
  height: 14px;
  border: 1px solid #111;
  background: #d0d2cd;
}
.chev {
  position: absolute;
  right: 4px;
  top: 11px;
  width: 10px;
  height: 6px;
  fill: none;
  stroke: #555;
  pointer-events: none;
}
.track {
  width: 188px;
  margin-right: 3px;
}
.via {
  width: 182px;
  margin: 0 1px 0 2px;
}
.layer-combo {
  width: 155px;
  margin: 0 2px 0 1px;
}
.grid-combo {
  width: 205px;
  margin: 0 1px 0 2px;
}
.zoom-combo {
  width: 115px;
  margin-left: 1px;
}

.workspace {
  display: flex;
  flex: 1;
  min-height: 0;
}
.sidebar {
  display: flex;
  flex: 0 0 34px;
  flex-direction: column;
  align-items: center;
  padding-top: 5px;
}
.side-tool {
  position: relative;
  display: grid;
  flex: none;
  place-items: center;
  width: 30px;
  height: 30px;
  margin-bottom: 2px;
  border: 1px solid transparent;
}
.side-tool.more::after {
  content: "";
  position: absolute;
  right: 0;
  bottom: -2px;
  border-bottom: 7px solid #000;
  border-left: 7px solid transparent;
}
.hsep {
  flex: none;
  width: 26px;
  height: 8px;
  background: linear-gradient(#8c8c8c, #8c8c8c) 0 2px / 100% 1px no-repeat;
}

.board {
  position: relative;
  flex: 1;
  min-width: 0;
  border: 1px solid #a0a0a0;
  background: #001023;
  overflow: hidden;
}
.canvas {
  width: 100%;
  height: 100%;
}
.sheet {
  fill: none;
  stroke: #c872ab;
}
.sheet-text {
  fill: #c872ab;
  font: 10px "Liberation Sans", sans-serif;
}
.zone-letter {
  font-size: 8px;
  text-anchor: middle;
}
.sheet-title {
  font-size: 12px;
  font-style: italic;
  font-weight: 700;
}
.court {
  fill: none;
  stroke: #ff26e2;
}
.silk {
  fill: none;
  stroke: #f2eda1;
}
.fab {
  fill: none;
  stroke: #afafaf;
}
.pad {
  fill: #001023;
  stroke: #e3b72e;
  stroke-width: 1.5;
}
.pad.wide {
  stroke-width: 2.5;
}
.pad.thin {
  fill: none;
  stroke-width: 1;
}
.silk-text,
.fab-text {
  font: 700 7px "DejaVu Sans Mono", monospace;
  text-anchor: middle;
}
.silk-text {
  fill: #f2eda1;
}
.fab-text {
  fill: #afafaf;
}
.fab-text.small {
  font-size: 6px;
}
.handle {
  fill: #fff;
  stroke: #8b8b8b;
}

.dialog {
  position: absolute;
  left: 771px;
  top: 175px;
  width: 375px;
  border-radius: 8px;
  background: #f0f0f0;
  box-shadow: 0 0 0 1px #30394a, 0 8px 24px rgb(0 0 0 / 45%);
}
.dialog-title {
  display: flex;
  align-items: center;
  justify-content: space-between;
  height: 30px;
  padding: 0 9px 0 8px;
  border-radius: 8px 8px 0 0;
  background: #f3f3f3;
  color: #929292;
}
.dialog-body {
  padding: 11px 10px 6px;
}
.dialog input:not([type="checkbox"]) {
  width: 118px;
  height: 27px;
  padding: 0 5px;
  border: 1px solid #e5e5e5;
  border-bottom-color: #868686;
  border-radius: 0;
  background: #fff;
  font: inherit;
  color: #111;
}
.points {
  display: flex;
  justify-content: space-between;
  padding-right: 1px;
}
fieldset {
  display: flex;
  flex-direction: column;
  gap: 4px;
  width: 165px;
  min-width: 0;
  margin: 0;
  padding: 3px 0 0;
  border: 0;
}
legend {
  width: 100%;
  padding: 0;
  text-align: center;
}
legend.start {
  padding-left: 14px;
}
.point,
.size-row,
.line-row {
  display: flex;
  align-items: center;
}
.point label {
  width: 17px;
}
.point span {
  margin-left: 4px;
}
.size {
  display: grid;
  gap: 4px;
  margin-top: 12px;
}
.size-row label {
  width: 55px;
}
.size-row span,
.line-row span {
  margin-left: 6px;
}
.flags {
  display: grid;
  gap: 5px;
  margin: 8px 0 14px;
}
.flags label {
  display: flex;
  align-items: center;
  gap: 4px;
}
input[type="checkbox"] {
  flex: none;
  appearance: none;
  width: 13px;
  height: 13px;
  margin: 0;
  border: 1px solid #666;
  border-radius: 3px;
  background: #f5f5f5;
}
input[type="checkbox"]:checked {
  position: relative;
  border-color: #005fb8;
  background: #005fb8;
}
input[type="checkbox"]:checked::after {
  content: "";
  position: absolute;
  left: 3px;
  top: 2px;
  width: 6px;
  height: 3px;
  border: solid #fff;
  border-width: 0 0 1px 1px;
  transform: rotate(-45deg);
}
.line-row label {
  width: 81px;
}
.dialog .line-row input:not([type="checkbox"]) {
  width: 161px;
}
.line-row + .line-row {
  margin-top: 6px;
}
.line-row + .layer-row {
  margin-top: 16px;
}
.line-row .combo {
  flex: 1;
}
.actions {
  display: flex;
  justify-content: flex-end;
  gap: 10px;
  margin-top: 46px;
}
.actions button {
  width: 73px;
  height: 26px;
  border: 1px solid #d0d0d0;
  border-radius: 4px;
  background: #fdfdfd;
}
.grip {
  position: absolute;
  right: 3px;
  bottom: 3px;
  width: 8px;
  height: 8px;
}

.panel {
  flex: 0 0 183px;
  border-left: 4px solid #dcdcdc;
  overflow: hidden;
}
h2 {
  height: 26px;
  margin: 0;
  padding: 3px;
  background: #b9b9b9;
  font-size: 14px;
  font-weight: 400;
}
h2.second {
  margin-top: 7px;
  box-shadow: 0 -4px #dcdcdc;
}
.tabs {
  position: relative;
  display: flex;
  align-items: flex-end;
  height: 33px;
  overflow: hidden;
}
.tab {
  height: 26px;
  padding: 0 6px 0 4px;
  border: 1px solid #e2e2e2;
  border-left: 0;
  background: #f3f3f3;
}
.tab.active {
  height: 28px;
  padding: 0 13px 2px 7px;
  background: #fafafa;
  border-bottom: 0;
}
.tab-scroll {
  position: absolute;
  right: 0;
  top: 7px;
  display: flex;
}
.tab-scroll button {
  display: grid;
  place-items: center;
  width: 23px;
  height: 23px;
  border: 1px solid #cfcfcf;
  border-radius: 2px;
  background: #fdfdfd;
}
.tab-scroll svg {
  width: 5px;
  height: 7px;
}
.tab-page {
  margin-right: 2px;
  padding: 2px 0 2px 4px;
  border: 1px solid #e2e2e2;
  border-width: 0 2px 2px 0;
  background: #f9f9f9;
  font-size: 12px;
}
.layer-area {
  display: flex;
  gap: 8px;
}
.layers {
  width: 155px;
  margin: 0;
  padding: 0 0 2px;
  background: #f0f0f0;
  list-style: none;
}
.layers li {
  position: relative;
  display: flex;
  align-items: center;
  height: 20px;
  padding-left: 18px;
}
.layers li.current {
  background: #e1e1e1;
}
.layers li.current::before {
  content: "";
  position: absolute;
  left: 6px;
  border: solid transparent;
  border-width: 5px 0 5px 6px;
  border-left-color: #4040ff;
}
.layers span {
  margin-top: 2px;
}
.color {
  width: 16px;
  height: 16px;
  margin-right: 6px;
  background-size: 10px 10px;
}
.eye {
  width: 16px;
  height: 16px;
  margin-right: 5px;
}
.thumb {
  width: 2px;
  height: 365px;
  margin-top: 16px;
  background: #868686;
}
.display-options {
  display: flex;
  align-items: center;
  gap: 2px;
  width: 162px;
  height: 22px;
  margin: 3px 0 0 5px;
  padding-left: 8px;
  background: #fff;
  color: #6d6d6d;
}
.display-options svg {
  width: 6px;
  height: 10px;
  fill: #555;
}
.presets {
  display: flex;
  flex-direction: column;
  padding: 12px 7px 0;
}
.presets label {
  font-size: 12px;
}
.presets .combo {
  margin-bottom: 5px;
}
.filters {
  display: grid;
  grid-template-columns: 105px 105px;
  grid-auto-rows: 20px;
  padding: 4px 0 0 5px;
  font-size: 12px;
}
.filters label {
  display: flex;
  align-items: center;
  gap: 3px;
}

.info {
  display: flex;
  gap: 39px;
  margin: 0;
  padding: 2px 14px 0;
  height: 41px;
  color: #6d6d6d;
}
.info dd {
  margin: 0;
}
.statusbar {
  display: grid;
  grid-template-columns: 585fr 97fr 203fr 321fr 234fr 78fr 214fr 187fr;
  height: 28px;
  padding: 2px 0;
  border-top: 1px solid #d0d0d0;
}
.statusbar span {
  min-width: 0;
  padding: 3px 4px 0;
  border-right: 1px solid #d7d7d7;
  overflow: hidden;
  white-space: pre;
}
.statusbar span:first-child {
  padding-left: 2px;
}
.statusbar span:last-child {
  border: 0;
}

.taskbar {
  display: flex;
  align-items: center;
  height: 39px;
  padding: 8px 18px 0 11px;
  border-top: 1px solid #b4c2cf;
  background: #d3e4f4;
}
.task {
  position: relative;
  display: grid;
  place-items: center;
  width: 44px;
  height: 30px;
}
.task svg {
  width: 24px;
  height: 24px;
}
.badge {
  position: absolute;
  right: 1px;
  top: -2px;
  width: 20px;
  height: 18px;
  border-radius: 9px;
  background: #0078d4;
  color: #fff;
  font-size: 12px;
  font-weight: 400;
  line-height: 18px;
}
.tray {
  display: flex;
  align-items: center;
  margin-left: auto;
  font-size: 12px;
  line-height: 16px;
}
.tray-icon {
  width: 16px;
  height: 16px;
}
.cloud {
  margin-left: 16px;
}
.lang {
  margin: 0 18px;
  text-align: center;
}
.speaker {
  margin-left: 8px;
}
.clock {
  margin: 0 7px 0 16px;
  text-align: right;
}
</style>
